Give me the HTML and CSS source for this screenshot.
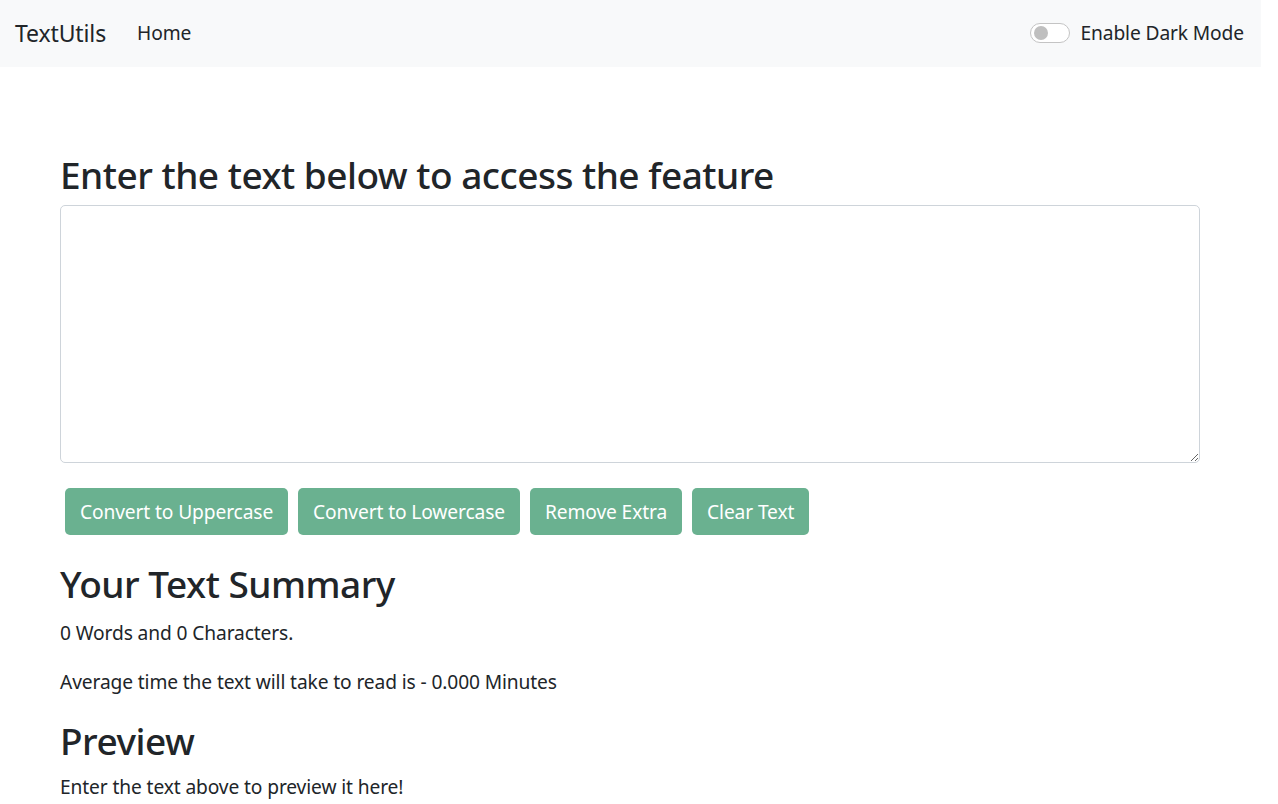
FILE: index.html
```html
<!DOCTYPE html>
<html lang="en">
<head>
<meta charset="utf-8">
<title>TextUtils</title>
<link rel="stylesheet" href="styles.css">
</head>
<body>
<div class="page">
  <nav class="navbar">
    <a class="brand" href="#">TextUtils</a>
    <a class="nav-link" href="#">Home</a>
    <div class="switch">
      <span class="switch-track"><span class="switch-knob"></span></span>
      <span class="switch-label">Enable Dark Mode</span>
    </div>
  </nav>
  <main class="main">
    <h1 class="title">Enter the text below to access the feature</h1>
    <textarea class="textbox"></textarea>
    <div class="buttons">
      <button class="btn">Convert to Uppercase</button>
      <button class="btn">Convert to Lowercase</button>
      <button class="btn">Remove Extra</button>
      <button class="btn">Clear Text</button>
    </div>
    <h2 class="section">Your Text Summary</h2>
    <p class="text">0 Words and 0 Characters.</p>
    <p class="text read">Average time the text will take to read is - 0.000 Minutes</p>
    <h2 class="section preview-title">Preview</h2>
    <p class="text">Enter the text above to preview it here!</p>
  </main>
</div>
</body>
</html>
```
FILE: styles.css
```css
html, body {
  margin: 0;
  padding: 0;
  background: #ffffff;
  overflow: hidden;
}
body {
  font-family: "Noto Sans", "Open Sans", sans-serif;
  color: #212529;
  font-size: 19.2px;
  line-height: 1.5;
  letter-spacing: -0.12px;
}
.page {
  width: 1261px;
}
.navbar {
  height: 67px;
  background: #f8f9fa;
  display: flex;
  align-items: center;
  padding: 0 17px 0 15px;
  box-sizing: border-box;
}
.brand {
  font-size: 23px;
  color: #212529;
  text-decoration: none;
  margin-right: 31px;
}
.nav-link {
  color: #212529;
  text-decoration: none;
  font-size: 19.2px;
}
.switch {
  margin-left: auto;
  display: flex;
  align-items: center;
}
.switch-track {
  box-sizing: border-box;
  width: 40px;
  height: 20px;
  border: 1px solid #c4c4c4;
  border-radius: 10px;
  background: #ffffff;
  display: flex;
  align-items: center;
  padding-left: 3px;
  margin-right: 11px;
}
.switch-knob {
  width: 14px;
  height: 14px;
  border-radius: 50%;
  background: #bfbfbf;
}
.switch-label {
  font-size: 19.2px;
}
.main {
  width: 1140px;
  margin-left: 60px;
  padding-top: 85px;
}
.title {
  font-size: 37px;
  letter-spacing: -0.5px;
  font-weight: 500;
  line-height: 1.25;
  margin: 0 0 7px 0;
}
.textbox {
  display: block;
  width: 1140px;
  height: 258px;
  box-sizing: border-box;
  border: 1px solid #ced4da;
  border-radius: 5px;
  margin: 0;
  resize: vertical;
  font-family: inherit;
}
.buttons {
  display: flex;
  gap: 10px;
  margin: 25px 0 0 5px;
}
.btn {
  height: 47px;
  padding: 0 15px;
  border: none;
  border-radius: 5px;
  background: #6ab190;
  color: #ffffff;
  font-family: inherit;
  font-size: 19.2px;
  letter-spacing: -0.12px;
}
.section {
  font-size: 37px;
  letter-spacing: -0.5px;
  font-weight: 500;
  line-height: 1.25;
  margin: 26px 0 11px 0;
}
.text {
  margin: 0 0 21px 0;
}
.preview-title {
  margin-top: 7px;
  margin-bottom: 9px;
}
```
